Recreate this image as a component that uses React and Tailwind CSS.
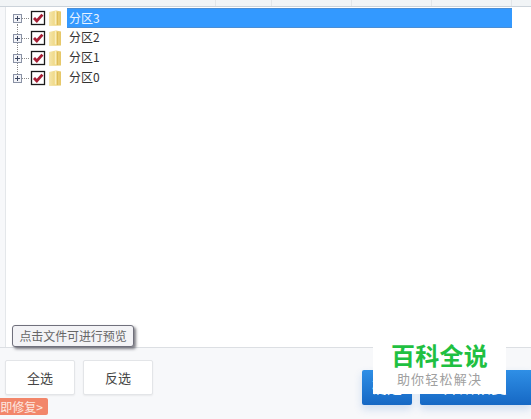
const F = '"Noto Sans CJK SC", sans-serif';

function Expander() {
  return (
    <svg width="30" height="20" viewBox="0 0 30 20" className="block shrink-0">
      <rect x="13.5" y="6.5" width="8" height="8" fill="#f3f4f8" stroke="#8b93a6" />
      <path d="M15 10.5h5M17.5 8v5" stroke="#3f4a63" />
      <path d="M22 10.5h7" stroke="#8a8a8a" strokeDasharray="1 1" />
    </svg>
  );
}

function Check() {
  return (
    <svg width="16" height="16" viewBox="0 0 16 16" className="block shrink-0">
      <rect x="1.5" y="1.5" width="13" height="13" fill="#fff" stroke="#1a1a1a" strokeWidth="1.3" />
      <path d="M4 8 6.8 11 12.4 4.6" fill="none" stroke="#a81f35" strokeWidth="2.8" />
    </svg>
  );
}

function Folder() {
  return (
    <svg width="14" height="18" viewBox="0 0 14 18" className="block shrink-0">
      <defs>
        <linearGradient id="fg" x1="0" y1="0" x2="1" y2="0">
          <stop offset="0" stopColor="#f5e6ac" />
          <stop offset="0.5" stopColor="#efd884" />
          <stop offset="1" stopColor="#e6c768" />
        </linearGradient>
      </defs>
      <path d="M1 3 8 1.5 13 2.5V16.5L1 17Z" fill="url(#fg)" />
      <path d="M7.5 2V15.5" stroke="#f9eebf" strokeWidth="1.5" />
      <path d="M9.5 3V16" stroke="#dfbd58" strokeWidth="1" />
    </svg>
  );
}

const rows = ['分区3', '分区2', '分区1', '分区0'];

export default function App() {
  return (
    <div
      className="relative w-[531px] h-[419px] overflow-hidden bg-white flex flex-col"
      style={{ fontFamily: F }}
    >
      <div className="h-[7px] shrink-0 flex bg-[#f1f4f6] border-b border-[#ccd3da]">
        <div className="w-[216px] border-r border-[#e2e6e9]" />
        <div className="w-[56px] border-r border-[#e2e6e9]" />
        <div className="w-[80px] border-r border-[#e2e6e9]" />
        <div className="w-[80px] border-r border-[#e2e6e9]" />
        <div className="w-[80px] border-r border-[#e2e6e9]" />
      </div>

      <div className="flex-1 flex min-h-0">
        <div className="w-[6px] bg-[#f7f8fa] border-r border-[#e4e7ea]" />
        <div className="relative flex-1 pt-px">
          <div className="absolute left-[11px] top-[17px] h-[52px] border-l border-dotted border-[#8a8a8a]" />
          {rows.map((r, i) => (
            <div key={r} className="relative h-[20px] flex items-center">
              <div className="-ml-[6px] w-[30px] shrink-0">
                <Expander />
              </div>
              <Check />
              <div className="ml-[2px]">
                <Folder />
              </div>
              <div
                className={
                  i === 0
                    ? 'ml-[5px] w-[445px] h-[20px] pl-[2px] leading-[17px] text-[12px] text-[#e8f3ff] bg-[#3399ff] border-y border-[#4a8ed6]'
                    : 'ml-[5px] pl-[2px] h-[20px] leading-[18px] text-[12px] text-[#333]'
                }
              >
                {r}
              </div>
            </div>
          ))}
        </div>
      </div>

      <div className="h-[72px] shrink-0 bg-[#f7f8fa] border-t border-[#dcdfe3] relative flex items-start px-[5px] pt-[12px]">
        <button className="w-[70px] h-[35px] bg-white border border-[#e3e5e8] rounded-[2px] text-[13px] text-[#444] shadow-[0_1px_2px_rgba(0,0,0,0.06)]">
          全选
        </button>
        <button className="ml-[8px] w-[70px] h-[35px] bg-white border border-[#e3e5e8] rounded-[2px] text-[13px] text-[#444] shadow-[0_1px_2px_rgba(0,0,0,0.06)]">
          反选
        </button>
        <button className="ml-auto mt-[10px] w-[50px] h-[35px] rounded-[2px] text-[15px] text-white bg-gradient-to-b from-[#2f8fe6] to-[#1668c4] shadow-[0_4px_8px_rgba(40,110,200,0.2)]">
          确定
        </button>
        <button className="ml-[8px] -mr-[5px] mt-[10px] w-[111px] h-[35px] rounded-l-[2px] text-[15px] tracking-[1px] text-white bg-gradient-to-b from-[#2f8fe6] to-[#1668c4] shadow-[0_4px_8px_rgba(40,110,200,0.2)]">
          开始恢复
        </button>
      </div>

      <div className="absolute left-[12px] top-[325px] w-[122px] h-[22px] rounded-[3px] bg-[#f3f3f6] border border-[#70707c] shadow-[2px_2px_3px_rgba(70,70,80,0.7)] text-[12px] leading-[20px] text-center text-[#666] tracking-[-0.1px]">
        点击文件可进行预览
      </div>

      <div className="absolute left-0 top-[398px] w-[48px] h-[17px] overflow-hidden rounded-r-[2px] bg-[#f2866a] flex justify-end items-center pr-[5px] text-[12px] text-[#fde8e0] whitespace-nowrap">
        立即修复&gt;
      </div>

      <div className="absolute left-[373px] top-[345px] w-[133px] h-[49px] bg-white flex flex-col items-center">
        <div className="text-[24px] leading-[28px] -mt-[4px] font-bold tracking-[0.2px] text-[#1fc041]">百科全说</div>
        <div className="text-[13px] leading-[18px] mt-[1px] text-[#a0a0a0] tracking-[1.2px]">助你轻松解决</div>
      </div>
    </div>
  );
}
